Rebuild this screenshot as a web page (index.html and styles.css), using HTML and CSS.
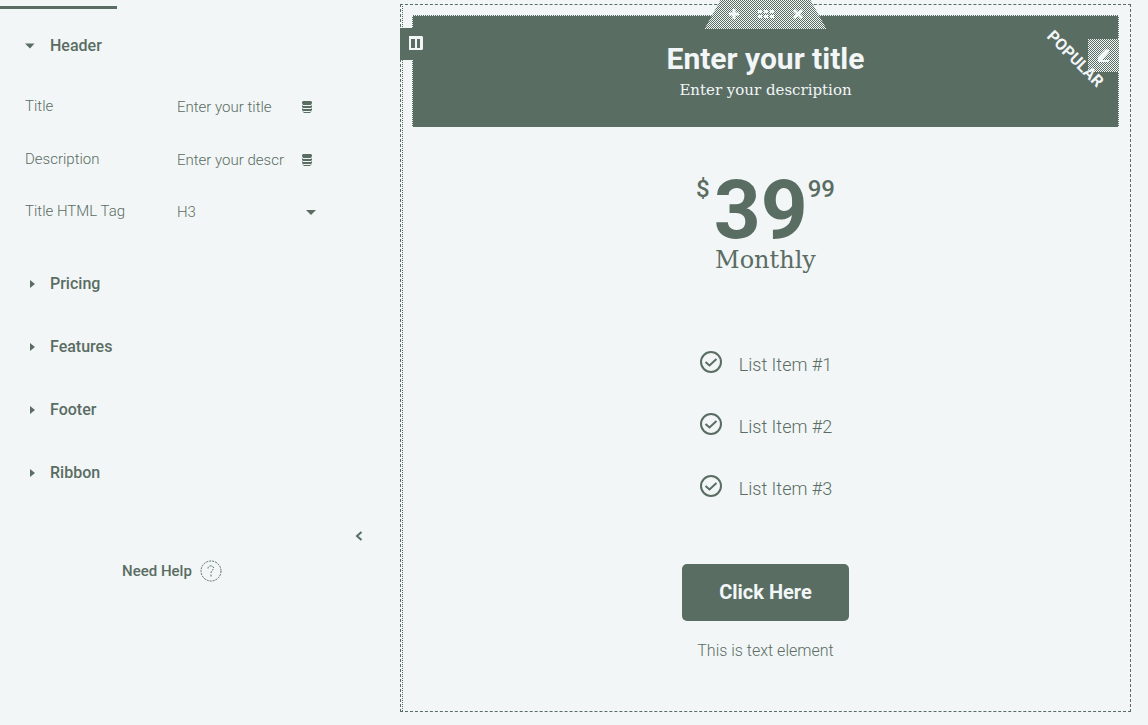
FILE: index.html
```html
<!DOCTYPE html>
<html lang="en">
<head>
<meta charset="utf-8">
<title>Price table editor</title>
<link rel="stylesheet" href="styles.css">
</head>
<body>
<div class="editor">
  <aside class="panel">
    <div class="tab-line"></div>
    <button class="section section-open" type="button" aria-expanded="true">
      <svg class="caret" width="10" height="10" viewBox="0 0 10 10"><path d="M0 2.500h9.500L5 7.500z"/></svg>Header</button>
    <div class="fields">
      <div class="field">
        <label for="title">Title</label>
        <input class="control" id="title" type="text" value="Enter your title">
        <button class="dynamic" type="button" aria-label="Dynamic title">
          <svg width="10" height="12" viewBox="0 0 10 12"><path d="M1 0h8l1 1v1L9 4H1L0 2V1zM0 4l1 1h8l1-1v2L9 7H1L0 6zM0 7l1 1h8l1-1v2l-1 1H1L0 9zM0 10l2 1h6l2-1-1 1-1 1H2z"/></svg>
        </button>
      </div>
      <div class="field">
        <label for="description">Description</label>
        <input class="control" id="description" type="text" value="Enter your description">
        <button class="dynamic" type="button" aria-label="Dynamic description">
          <svg width="10" height="12" viewBox="0 0 10 12"><path d="M1 0h8l1 1v1L9 4H1L0 2V1zM0 4l1 1h8l1-1v2L9 7H1L0 6zM0 7l1 1h8l1-1v2l-1 1H1L0 9zM0 10l2 1h6l2-1-1 1-1 1H2z"/></svg>
        </button>
      </div>
      <div class="field field-select">
        <label for="tag">Title HTML Tag</label>
        <select class="control" id="tag"><option>H3</option></select>
        <svg class="select-caret" width="10" height="10" viewBox="0 0 10 10"><path d="M0 3h10L5 8z"/></svg>
      </div>
    </div>
    <div class="sections">
      <button class="section" type="button"><svg class="caret" width="10" height="10" viewBox="0 0 10 10"><path d="M5 1v8l5-4z"/></svg>Pricing</button>
      <button class="section" type="button"><svg class="caret" width="10" height="10" viewBox="0 0 10 10"><path d="M5 1v8l5-4z"/></svg>Features</button>
      <button class="section" type="button"><svg class="caret" width="10" height="10" viewBox="0 0 10 10"><path d="M5 1v8l5-4z"/></svg>Footer</button>
      <button class="section" type="button"><svg class="caret" width="10" height="10" viewBox="0 0 10 10"><path d="M5 1v8l5-4z"/></svg>Ribbon</button>
    </div>
    <button class="collapse" type="button" aria-label="Collapse panel">
      <svg width="8" height="10" viewBox="0 0 8 10"><path class="stroke" d="M6.500 1 2 5l4.500 4"/></svg>
    </button>
    <a class="help" href="#">Need Help
      <svg width="22" height="22" viewBox="0 0 22 22"><circle class="stroke ring" cx="11" cy="11" r="10"/><path class="stroke ring" d="M8 8.500C8 5 14 5 13.500 8.500 13 10.500 11 10.500 11 13M11 14.500v2"/></svg>
    </a>
  </aside>

  <main class="canvas">
    <button class="column-handle" type="button" aria-label="Edit column">
      <svg width="14" height="14" viewBox="0 0 14 14"><path fill-rule="evenodd" d="M0 0h13l1 1v12l-1 1H0zM2 3v9h4V3zM8 3v9h3V3z"/></svg>
    </button>
    <div class="section-tools">
      <button type="button" aria-label="Add section"><svg width="12" height="12" viewBox="0 0 12 12"><path d="M4.500 1h3v3.500H11v3H7.500V11h-3V7.500H1v-3h3.500z"/></svg></button>
      <button type="button" aria-label="Drag section"><svg width="18" height="12" viewBox="0 0 18 12"><path d="M1 2h4v3H1zM7 2h4v3H7zM13 2h4v3h-4zM1 7h4v3H1zM7 7h4v3H7zM13 7h4v3h-4z"/></svg></button>
      <button type="button" aria-label="Delete section"><svg width="12" height="12" viewBox="0 0 12 12"><path d="M3 1l3 3 3-3 2 2-3 3 3 3-2 2-3-3-3 3-2-2 3-3-3-3z"/></svg></button>
    </div>
    <article class="price-table">
      <header class="plan-header">
        <h3 class="plan-title">Enter your title</h3>
        <p class="plan-description">Enter your description</p>
        <button class="edit" type="button" aria-label="Edit widget">
          <svg width="16" height="16" viewBox="0 0 16 16"><path d="M10 1l3 1v2L6 12h7v2H3l-1-1V9z"/></svg>
        </button>
        <span class="ribbon">POPULAR</span>
      </header>
      <div class="price"><span class="currency">$</span><span class="amount">39</span><span class="cents">99</span></div>
      <p class="period">Monthly</p>
      <ul class="features">
        <li><svg width="24" height="24" viewBox="0 0 24 24"><circle class="stroke" cx="12" cy="12" r="10"/><path class="stroke" d="M6.500 12l4 3.500L17.500 9"/></svg>List Item #1</li>
        <li><svg width="24" height="24" viewBox="0 0 24 24"><circle class="stroke" cx="12" cy="12" r="10"/><path class="stroke" d="M6.500 12l4 3.500L17.500 9"/></svg>List Item #2</li>
        <li><svg width="24" height="24" viewBox="0 0 24 24"><circle class="stroke" cx="12" cy="12" r="10"/><path class="stroke" d="M6.500 12l4 3.500L17.500 9"/></svg>List Item #3</li>
      </ul>
      <a class="cta" href="#">Click Here</a>
      <p class="note">This is text element</p>
    </article>
  </main>
</div>
</body>
</html>
```
FILE: styles.css
```css
:root {
  --ink: #5a6d63;
  --paper: #f2f6f7;
  --mesh: repeating-conic-gradient(var(--ink) 0 25%, var(--paper) 0 50%) 0 0 / 2px 2px;
}
* { box-sizing: border-box; }
body {
  margin: 0;
  background: var(--paper);
  color: var(--ink);
  font-family: Roboto, "Liberation Sans", sans-serif;
}
h3, p, ul { margin: 0; padding: 0; }
button {
  border: 0;
  padding: 0;
  background: none;
  color: inherit;
  font: inherit;
}
svg { display: block; flex: none; fill: currentColor; }
.stroke { fill: none; stroke: currentColor; stroke-width: 2; }

.editor { display: grid; grid-template-columns: 400px 1fr; }

/* Settings panel */
.panel { display: flex; flex-direction: column; padding-top: 6px; }
.tab-line { width: 117px; height: 3px; background: var(--ink); }
.section {
  display: flex;
  align-items: center;
  gap: 15px;
  height: 63px;
  padding-left: 25px;
  font-size: 16px;
  font-weight: 500;
}
.section-open { margin-top: 5px; }
.fields { padding: 3px 0 0 25px; }
.field {
  display: grid;
  grid-template-columns: 152px 108px 44px;
  align-items: center;
  height: 53px;
  font-size: 15px;
  font-weight: 300;
}
.field label { padding-bottom: 2px; }
.field-select { height: 51px; }
.control {
  width: 100%;
  height: 24px;
  border: 0;
  padding: 0;
  appearance: none;
  background: none;
  color: inherit;
  font: inherit;
  outline: 0;
}
.dynamic { justify-self: center; }
.select-caret { justify-self: center; margin-left: 8px; }
.sections { display: flex; flex-direction: column; margin-top: 15px; }
.collapse { align-self: flex-end; margin: 20px 37px 0 0; height: 24px; }
.help {
  display: flex;
  align-items: center;
  gap: 8px;
  margin: 12px 0 0 122px;
  color: inherit;
  font-size: 15px;
  font-weight: 500;
  text-decoration: none;
}
.ring { stroke-width: 1; stroke-dasharray: 2 1; }

/* Preview canvas */
.canvas {
  position: relative;
  margin: 4px 17px 13px 0;
  border: 1px dashed var(--ink);
  padding: 10px 11px 48px 1px;
}
.canvas::before {
  content: "";
  position: absolute;
  inset: 1px auto 0 1px;
  border-left: 1px dotted var(--ink);
}
.column-handle {
  position: absolute;
  z-index: 1;
  top: 23px;
  left: -1px;
  display: grid;
  place-items: center;
  width: 32px;
  height: 32px;
  padding-bottom: 2px;
  background: var(--ink);
  color: var(--paper);
}
.section-tools {
  position: absolute;
  z-index: 1;
  top: -5px;
  left: 50%;
  display: flex;
  align-items: center;
  justify-content: space-between;
  width: 122px;
  height: 29px;
  margin-left: -61px;
  padding: 0 23px 2px;
  background: var(--mesh);
  clip-path: polygon(16px 0, 106px 0, 100% 100%, 0 100%);
  color: var(--paper);
}
.price-table {
  display: flex;
  flex-direction: column;
  align-items: center;
  padding-left: 10px;
  text-align: center;
}
.plan-header {
  position: relative;
  align-self: stretch;
  border: 1px dotted var(--paper);
  border-bottom: 0;
  padding: 25px 0 24px;
  background: var(--ink);
  color: var(--paper);
}
.plan-title { font-size: 30px; font-weight: 700; line-height: 36px; }
.plan-description {
  font-family: "Roboto Slab", "DejaVu Serif", serif;
  font-size: 15px;
  line-height: 26px;
}
.edit {
  position: absolute;
  top: 23px;
  right: -1px;
  display: grid;
  place-items: center;
  width: 31px;
  height: 33px;
  background: var(--mesh);
}
.ribbon {
  position: absolute;
  top: 33px;
  right: 7px;
  width: 72px;
  font-size: 16px;
  font-weight: 700;
  line-height: 20px;
  transform: rotate(45deg);
}
.price {
  display: flex;
  align-items: flex-start;
  margin-top: 46px;
  font-weight: 500;
}
.currency, .cents { padding-top: 2px; font-size: 24px; line-height: 28px; }
.currency { padding-right: 4px; }
.amount { font-size: 82px; font-weight: 700; line-height: 74px; }
.period {
  font-family: "Roboto Slab", "DejaVu Serif", serif;
  font-size: 24px;
  line-height: 26px;
}
.features { margin-top: 60px; list-style: none; }
.features li {
  display: flex;
  align-items: center;
  gap: 16px;
  height: 62px;
  font-size: 18px;
  font-weight: 300;
}
.features svg { margin-bottom: 4px; }
.cta {
  margin-top: 45px;
  border-radius: 5px;
  padding: 16px 37px;
  background: var(--ink);
  color: var(--paper);
  font-size: 20px;
  font-weight: 700;
  line-height: 25px;
  text-decoration: none;
}
.note { margin-top: 18px; font-size: 16px; font-weight: 300; line-height: 24px; }
```
